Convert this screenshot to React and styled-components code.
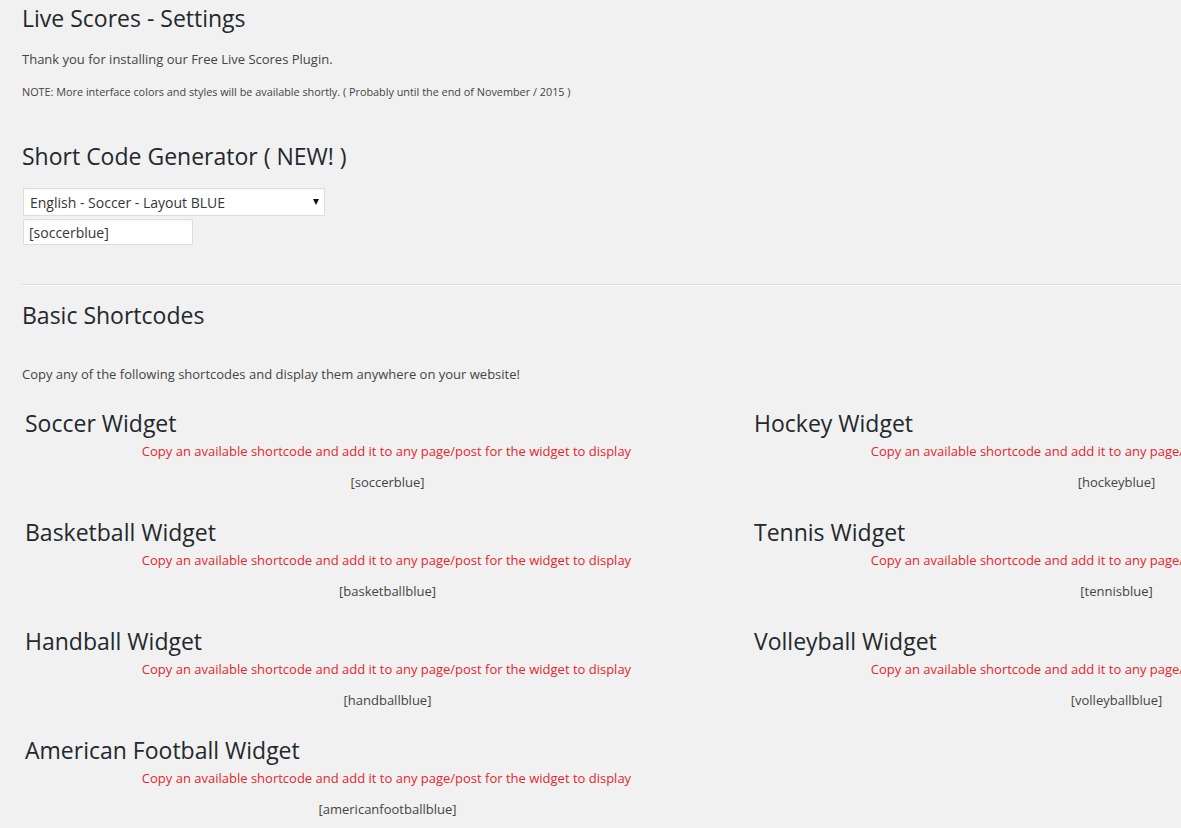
import React from 'react'
import styled, { createGlobalStyle } from 'styled-components'

const GlobalStyle = createGlobalStyle`
  html, body {
    margin: 0;
    padding: 0;
    background: #f1f1f1;
    overflow-x: hidden;
  }
  body {
    font-family: "Open Sans", "Noto Sans", sans-serif;
    color: #444;
  }
`

const Wrap = styled.div`
  padding: 4px 0 40px 22px;
  width: calc(100vw - 22px);
`

const Title = styled.h1`
  margin: 0;
  font-size: 23px;
  font-weight: 400;
  line-height: 29px;
  color: #23282d;
`

const SectionTitle = styled.h2`
  margin: ${props => props.$top || 0}px 0 0;
  font-size: 23px;
  font-weight: 400;
  line-height: 29px;
  color: #23282d;
`

const Text = styled.p`
  margin: ${props => props.$top || 0}px 0 0;
  font-size: ${props => props.$small ? 10.85 : 13}px;
  line-height: ${props => props.$small ? 16 : 20}px;
  color: #444;
`

const SelectBox = styled.div`
  position: relative;
  width: 302px;
  margin: 17px 0 0 1px;
  &::after {
    content: '';
    position: absolute;
    right: 6px;
    top: 11px;
    border-left: 3.5px solid transparent;
    border-right: 3.5px solid transparent;
    border-top: 6px solid #111;
    pointer-events: none;
  }
`

const Select = styled.select`
  appearance: none;
  -webkit-appearance: none;
  display: block;
  width: 100%;
  height: 28px;
  margin: 0;
  padding: 0 20px 0 6px;
  border: 1px solid #ddd;
  border-radius: 0;
  background: #fff;
  font-family: "Open Sans", sans-serif;
  font-size: 14px;
  color: #32373c;
  box-shadow: inset 0 1px 2px rgba(0, 0, 0, 0.04);
`

const CodeInput = styled.input`
  display: block;
  box-sizing: border-box;
  width: 170px;
  height: 26px;
  margin: 3px 0 0 1px;
  padding: 0 5px;
  border: 1px solid #ddd;
  background: #fff;
  font-family: "Open Sans", sans-serif;
  font-size: 14px;
  color: #32373c;
  box-shadow: inset 0 1px 2px rgba(0, 0, 0, 0.04);
`

const Divider = styled.hr`
  margin: 39px 0 0;
  border: 0;
  border-top: 1px solid #dcdcdc;
  border-bottom: 1px solid #fafafa;
`

const WidgetGrid = styled.div`
  display: grid;
  grid-template-columns: 729px 729px;
  row-gap: 26px;
  margin-top: 25px;
`

const Widget = styled.div`
  display: flex;
  flex-direction: column;
`

const WidgetName = styled.h3`
  margin: 0;
  padding-left: 3px;
  font-size: 23px;
  font-weight: 400;
  line-height: 29px;
  color: #23282d;
`

const Hint = styled.div`
  margin-top: 3px;
  text-align: center;
  font-size: 13px;
  line-height: 20px;
  color: #e5262e;
  white-space: nowrap;
`

const Shortcode = styled.div`
  margin-top: 11px;
  padding-left: 2px;
  text-align: center;
  font-size: 13px;
  line-height: 20px;
  color: #444;
`

const widgets = [
  { name: 'Soccer Widget', code: '[soccerblue]' },
  { name: 'Hockey Widget', code: '[hockeyblue]' },
  { name: 'Basketball Widget', code: '[basketballblue]' },
  { name: 'Tennis Widget', code: '[tennisblue]' },
  { name: 'Handball Widget', code: '[handballblue]' },
  { name: 'Volleyball Widget', code: '[volleyballblue]' },
  { name: 'American Football Widget', code: '[americanfootballblue]' },
]

export default function App() {
  return (
    <>
      <GlobalStyle />
      <Wrap>
        <Title>Live Scores - Settings</Title>
        <Text $top={16}>Thank you for installing our Free Live Scores Plugin.</Text>
        <Text $small $top={15}>
          NOTE: More interface colors and styles will be available shortly. ( Probably until the end of November / 2015 )
        </Text>

        <SectionTitle $top={42}>Short Code Generator ( NEW! )</SectionTitle>
        <SelectBox>
          <Select defaultValue="soccerblue">
            <option value="soccerblue">English - Soccer - Layout BLUE</option>
          </Select>
        </SelectBox>
        <CodeInput readOnly value="[soccerblue]" />

        <Divider />

        <SectionTitle $top={15}>Basic Shortcodes</SectionTitle>
        <Text $top={34}>Copy any of the following shortcodes and display them anywhere on your website!</Text>

        <WidgetGrid>
          {widgets.map(w => (
            <Widget key={w.code}>
              <WidgetName>{w.name}</WidgetName>
              <Hint>Copy an available shortcode and add it to any page/post for the widget to display</Hint>
              <Shortcode>{w.code}</Shortcode>
            </Widget>
          ))}
        </WidgetGrid>
      </Wrap>
    </>
  )
}
